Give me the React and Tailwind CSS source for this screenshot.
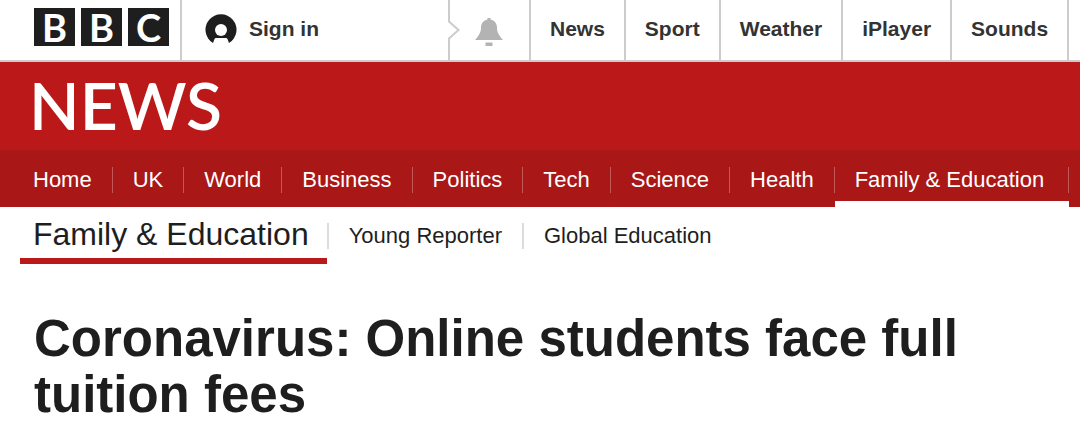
const siteLinks = ['News', 'Sport', 'Weather', 'iPlayer', 'Sounds'];

const sections = [
  'Home',
  'UK',
  'World',
  'Business',
  'Politics',
  'Tech',
  'Science',
  'Health',
  'Family & Education',
];

const subSections = ['Young Reporter', 'Global Education'];

const UserIcon = () => (
  <svg width="32" height="30" viewBox="0 0 32 30" aria-hidden="true">
    <path
      fill="#1e1e1e"
      d="M8 29A15.500 15.500 0 1 1 24 29L22.500 25Q22 24 21 24H11Q10 24 9.500 25Z"
    />
    <circle cx="16" cy="16" r="6" fill="#fff" />
  </svg>
);

const BellIcon = () => (
  <svg width="28" height="28" viewBox="0 0 28 28" aria-hidden="true" fill="#b3b3b3">
    <path d="M12.500 0h3v1.500C19.500 2.300 22 5.500 22 9.500 22 14 23.500 17 28 22H0c4.500-5 6-8 6-12.500 0-4 2.500-7.200 6.500-8z" />
    <path d="M10.500 24.500h7V28h-7z" />
  </svg>
);

const Chevron = () => (
  <svg
    className="absolute -left-0.5 top-5"
    width="13"
    height="20"
    viewBox="0 0 13 20"
    fill="none"
    aria-hidden="true"
  >
    <path d="M0 1h2v18H0z" fill="#fff" />
    <path d="M1 0v1.500L10.500 10 1 18.500V20" stroke="#ccc" strokeWidth="2" />
  </svg>
);

const TopBar = () => (
  <header className="flex h-[62px] border-b-2 border-[#ccc] bg-white text-[21px] font-bold text-[#333]">
    <a
      href="#bbc"
      aria-label="BBC"
      className="flex items-start gap-1.5 border-r-2 border-[#ccc] pl-[34px] pr-[11px] pt-2"
    >
      {['B', 'B', 'C'].map((letter, i) => (
        <span
          key={i}
          className="flex h-[38px] w-[41px] items-center justify-center bg-[#1e1e1e] font-[Lato] text-[38px] leading-[36px] text-white"
        >
          {letter}
        </span>
      ))}
    </a>
    <a href="#signin" className="flex w-[266px] items-center gap-3 pb-0.5 pl-[23px]">
      <UserIcon />
      <span>Sign in</span>
    </a>
    <button
      type="button"
      aria-label="Notifications"
      className="relative flex w-[83px] items-center border-x-2 border-[#ccc] pl-[25px] pt-1"
    >
      <Chevron />
      <BellIcon />
    </button>
    <nav className="flex" aria-label="BBC">
      {siteLinks.map((link) => (
        <a
          key={link}
          href={`#${link.toLowerCase()}`}
          className="flex items-center border-r-2 border-[#ccc] px-[19px] pb-0.5"
        >
          {link}
        </a>
      ))}
    </nav>
  </header>
);

const SectionNav = () => (
  <nav className="flex h-[57px] bg-[#a91717] pl-[33px] text-[22px] text-white" aria-label="News sections">
    {sections.map((section, i) => {
      const active = i === sections.length - 1;
      return (
        <a
          key={section}
          href={`#section-${i}`}
          aria-current={active ? 'page' : undefined}
          className={`flex shrink-0 flex-col whitespace-nowrap ${
            active ? 'border-b-[6px] border-white' : ''
          }`}
        >
          <span
            className={`mt-[17px] border-r border-[#c25858] leading-[26px] ${
              i === 0 ? '' : 'pl-5'
            } ${active ? 'pr-6' : 'pr-5'}`}
          >
            {section}
          </span>
        </a>
      );
    })}
  </nav>
);

const SubNav = () => (
  <nav className="flex pl-5 text-[22px] text-[#1e1e1e]" aria-label="Family & Education">
    <a
      href="#family-education"
      className="border-b-[6px] border-[#bb1919] pb-[5px] pl-[13px] pr-[18px] pt-2 text-[32px] leading-[38px]"
    >
      Family &amp; Education
    </a>
    {subSections.map((item, i) => (
      <a
        key={item}
        href={`#sub-${i}`}
        className="mt-4 h-[26px] border-l-2 border-[#dcdcdc] px-5 leading-[26px]"
      >
        {item}
      </a>
    ))}
  </nav>
);

const App = () => {
  return (
    <div className="bg-white font-['Liberation_Sans',Arial,sans-serif]">
      <TopBar />
      <div className="bg-[#bb1919]">
        <a
          href="#news"
          className="block h-[88px] pl-[29px] font-[Lato] text-[66px] font-semibold leading-[86px] text-white"
        >
          NEWS
        </a>
        <SectionNav />
      </div>
      <SubNav />
      <main className="px-[34px] pt-[47px]">
        <h1 className="max-w-[1000px] text-[51px] font-bold leading-[56px] text-[#1e1e1e]">
          Coronavirus: Online students face full tuition fees
        </h1>
      </main>
    </div>
  );
};

export default App;
